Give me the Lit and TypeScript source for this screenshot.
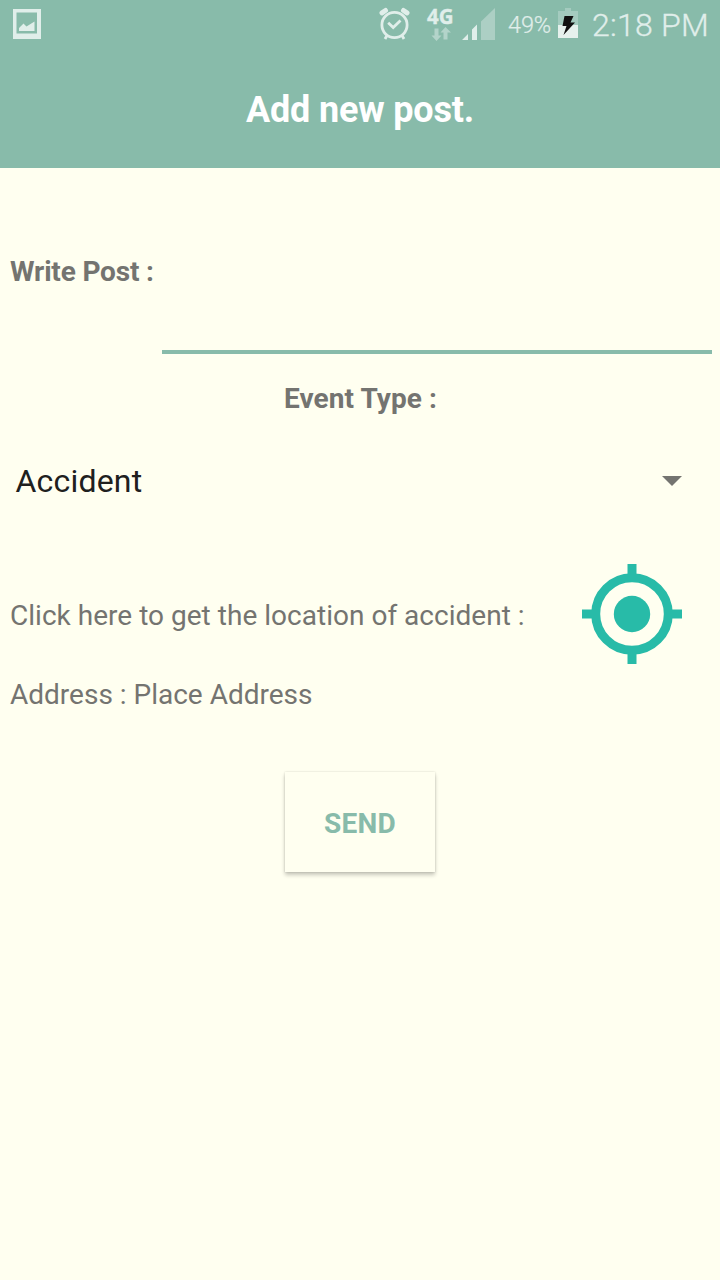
import { LitElement, html, css } from "lit";
import { customElement, property } from "lit/decorators.js";

@customElement("status-bar")
class StatusBar extends LitElement {
  @property() time = "2:18 PM";
  @property() battery = "49%";

  static styles = css`
    :host {
      display: flex;
      height: 48px;
      padding: 0 12px 0 13px;
      color: #e0eeea;
      white-space: nowrap;
    }
    svg { display: block; flex: none; height: 48px; }
    .spacer { flex: 1; }
    .network { width: 26px; margin: 0 9px 0 17px; }
    .gen {
      height: 33px;
      font: 700 20.5px/33px "Open Sans", sans-serif;
      -webkit-text-stroke: 0.3px #e0eeea;
    }
    .network svg { height: 15px; margin-top: -7px; }
    .battery { width: 43px; margin: 0 7px 0 13px; font-size: 23.5px; line-height: 50px; font-weight: 300; letter-spacing: -0.1px; -webkit-text-stroke: 0.2px #e0eeea; }
    .time { width: 116px; margin-left: 14px; font-size: 32px; line-height: 51px; font-weight: 300; letter-spacing: 0.25px; -webkit-text-stroke: 0.3px #e0eeea; }
  `;

  render() {
    return html`
      <svg width="28" height="48" viewBox="13 0 28 48">
        <path fill="#e0eeea" fill-rule="evenodd" d="M13 9h28v30H13zM16.500 12.500v21h20.500v-21z" />
        <path fill="#e0eeea" d="M19 31v-3l4.500-4.500 3 3 8-5V31z" />
      </svg>
      <div class="spacer"></div>
      <svg width="32" height="48" viewBox="378 0 32 48" fill="none" stroke="#e0eeea">
        <circle cx="394.500" cy="25" r="12.600" stroke-width="2.800" />
        <path stroke-width="2.800" d="M388.200 22.800l5 4.800 7.300-7" />
        <path stroke-width="5" stroke-linecap="round" d="M382 12.800l3.500-2.300M407 12.800l-3.500-2.300" />
        <path stroke-width="2.800" d="M387 35.500l-2 3.500M402 35.500l2 3.500" />
      </svg>
      <div class="network">
        <div class="gen">4G</div>
        <svg width="26" height="15" viewBox="427 26 26 15">
          <path fill="#b3d4ca" d="M434.500 28.500h4V35.500h3l-5 5.500-5-5.500h3zM443.500 39.500h4V32.500h3.500l-5.500-5.500-5 5.500h3z" />
        </svg>
      </div>
      <svg width="33" height="48" viewBox="462 0 33 48">
        <path fill="#e0eeea" d="M462 40l6-6v6zM472 29.500l5-5V40h-5z" />
        <path fill="#accfc4" d="M481 21.500L495 8v32h-14z" />
      </svg>
      <div class="battery">${this.battery}</div>
      <svg width="20" height="48" viewBox="558 0 20 48">
        <path fill="#a4cbbf" d="M558 11h7V8h6v3h7v14h-20z" />
        <path fill="#e6f1ed" d="M558 25h20v13h-20z" />
        <path fill="#111" d="M564.500 16h9l-3 6.500h4.500L563.500 35l3-9h-4z" />
      </svg>
      <div class="time">${this.time}</div>
    `;
  }
}

@customElement("app-root")
class AppRoot extends LitElement {
  static styles = css`
    :host {
      display: block;
      box-sizing: border-box;
      height: 1280px;
      overflow: hidden;
      background: #fffff0;
      color: #747470;
      font-family: Roboto, sans-serif;
      font-size: 28px;
      line-height: 34px;
    }
    header { height: 168px; background: #88bbaa; }
    h1 {
      margin: 0;
      padding-top: 41px;
      color: #fff;
      font-size: 36px;
      font-weight: 700;
      line-height: 42px;
      letter-spacing: -0.17px;
      text-align: center;
    }
    .post { display: flex; height: 186px; padding: 0 8px 0 10px; box-sizing: border-box; }
    .post label { width: 152px; padding-top: 87px; font-weight: 700; letter-spacing: -0.17px; white-space: nowrap; }
    .post .input { flex: 1; border-bottom: 4px solid #88bbaa; }
    .type { padding: 28px 0 0 1px; font-weight: 700; letter-spacing: 0.08px; text-align: center; }
    .select {
      display: flex;
      align-items: center;
      justify-content: space-between;
      height: 96px;
      margin-top: 17px;
      padding: 0 38px 0 15.5px;
      color: #20201e;
      font-size: 32px;
      letter-spacing: 0.2px;
    }
    .select svg, .locate svg { display: block; }
    .locate {
      display: flex;
      align-items: center;
      justify-content: space-between;
      height: 100px;
      margin-top: 35px;
      padding: 0 38px 0 10px;
    }
    .locate span { padding-top: 4px; letter-spacing: 0.02px; }
    .address { padding: 14px 10px 0; }
    .send {
      display: block;
      width: 150px;
      height: 100px;
      margin: 60px auto 0;
      padding: 4px 0 0;
      border: 0;
      background: #fffff0;
      box-shadow: 0 0 2px rgba(0, 0, 0, 0.15), 0 3px 4px rgba(0, 0, 0, 0.22);
      color: #88bbaa;
      font: 700 28px/34px Roboto, sans-serif;
      letter-spacing: 0.3px;
    }
  `;

  render() {
    return html`
      <header>
        <status-bar></status-bar>
        <h1>Add new post.</h1>
      </header>
      <main>
        <div class="post"><label>Write Post :</label><div class="input"></div></div>
        <div class="type">Event Type :</div>
        <div class="select">
          <span>Accident</span>
          <svg width="20" height="10" viewBox="0 0 20 10"><path fill="#747470" d="M0 0h20L10 10z" /></svg>
        </div>
        <div class="locate">
          <span>Click here to get the location of accident :</span>
          <svg width="100" height="100" viewBox="0 0 100 100" fill="#28bba8">
            <circle cx="50" cy="50" r="36.300" fill="none" stroke="#28bba8" stroke-width="9" />
            <circle cx="50" cy="50" r="18.200" />
            <path d="M45.500 0h9v11h-9zM45.500 89h9v11h-9zM0 45.500h11v9H0zM89 45.500h11v9H89z" />
          </svg>
        </div>
        <div class="address">Address : Place Address</div>
        <button class="send">SEND</button>
      </main>
    `;
  }
}
